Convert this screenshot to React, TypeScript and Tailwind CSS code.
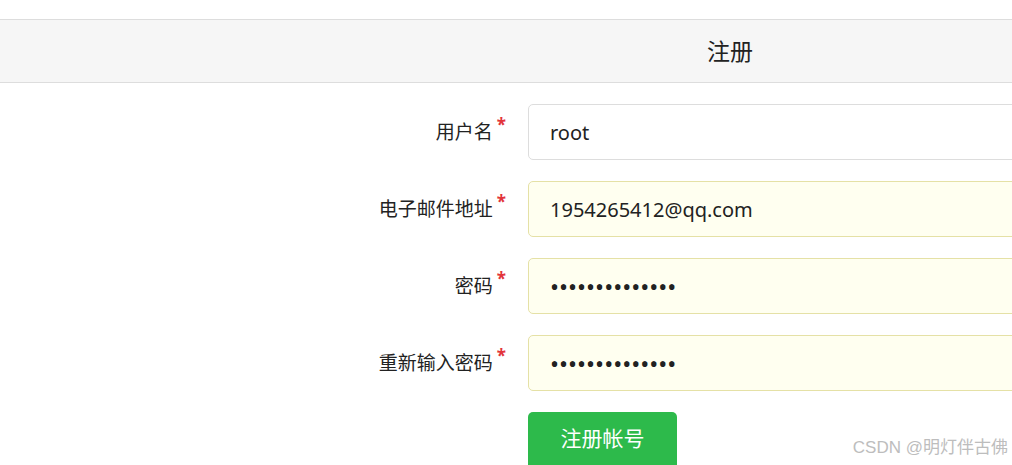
const fields = [
  { label: "用户名", value: "root", type: "text", filled: false },
  { label: "电子邮件地址", value: "1954265412@qq.com", type: "email", filled: true },
  { label: "密码", value: "12345678901234", type: "password", filled: true },
  { label: "重新输入密码", value: "12345678901234", type: "password", filled: true },
];

export default function App() {
  return (
    <div
      className="relative h-[465px] w-[1012px] overflow-hidden bg-white text-[#333]"
      style={{ fontFamily: '"Noto Sans", "Noto Sans CJK SC", sans-serif' }}
    >
      <div className="h-[19px]" />
      <div className="flex h-[64px] items-center border-y border-[#dddddd] bg-[#f6f6f6] pl-[707px]">
        <h1 className="text-[23px] leading-none font-normal text-[#222]">注册</h1>
      </div>

      <form className="flex flex-col gap-[21px] pt-[21px]">
        {fields.map((f) => (
          <div key={f.label} className="flex items-center">
            <label className="flex w-[528px] shrink-0 items-start justify-end pr-[22px] text-[19px] leading-none text-[#222]">
              <span>{f.label}</span>
              <span className="ml-[4px] -mt-[7px] text-[17px] font-bold text-[#e2343a]">*</span>
            </label>
            <input
              type={f.type}
              defaultValue={f.value}
              readOnly
              className={`h-[56px] w-[600px] shrink-0 rounded-[5px] border px-[21px] text-[#222] outline-none ${
                f.type === "password" ? "text-[24px]" : "text-[20px]"
              } ${f.filled ? "border-[#e5e1a6] bg-[#fffff0]" : "border-[#dddddd] bg-white"}`}
            />
          </div>
        ))}
        <div className="pl-[528px]">
          <button
            type="button"
            className="h-[60px] w-[149px] rounded-[5px] bg-[#2dba4b] pb-[6px] text-[21px] text-white"
          >
            注册帐号
          </button>
        </div>
      </form>

      <div
        className="absolute right-[4px] bottom-[5px] text-[17px] text-[#bdbdbd]"
        style={{ fontFamily: '"Liberation Sans", "Noto Sans CJK SC", sans-serif' }}
      >
        CSDN @明灯伴古佛
      </div>
    </div>
  );
}
